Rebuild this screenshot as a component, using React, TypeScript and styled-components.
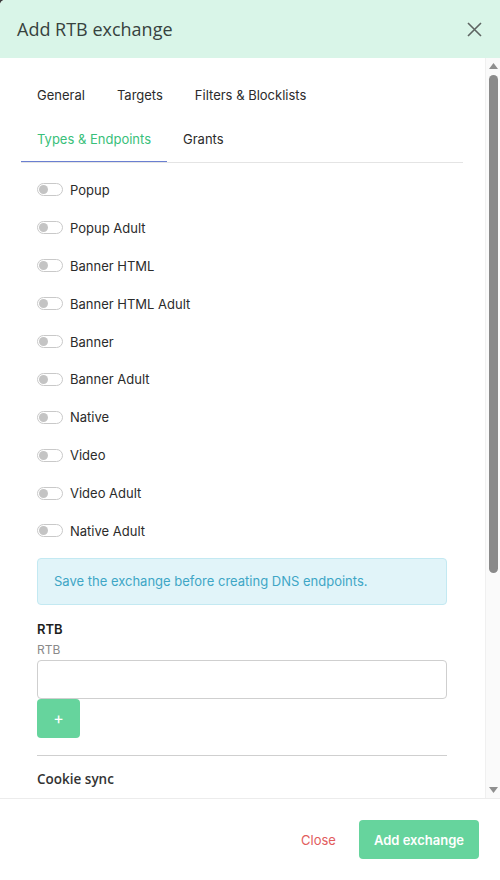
import React from 'react'
import styled, { createGlobalStyle } from 'styled-components'

const GlobalStyle = createGlobalStyle`
  html, body {
    margin: 0;
    padding: 0;
    height: 100%;
    background: #3a3a3a;
  }
  #root {
    height: 100%;
  }
  * {
    box-sizing: border-box;
  }
`

const Modal = styled.div`
  height: 880px;
  width: 500px;
  display: flex;
  flex-direction: column;
  background: #fff;
  border-top-left-radius: 5px;
  overflow: hidden;
  font-family: Inter, 'Noto Sans', sans-serif;
  color: #2b2b2b;
`

const Header = styled.div`
  flex: 0 0 58px;
  display: flex;
  align-items: center;
  justify-content: space-between;
  padding: 0 16px 0 17px;
  background: #d9f5e8;
`

const Title = styled.h2`
  margin: 0;
  font-family: 'Open Sans', sans-serif;
  font-weight: 400;
  font-size: 18px;
  color: #37423e;
`

const CloseX = styled.button`
  border: 0;
  background: transparent;
  padding: 0;
  width: 20px;
  height: 20px;
  display: flex;
  align-items: center;
  justify-content: center;
  cursor: pointer;
`

const BodyRow = styled.div`
  flex: 1;
  display: flex;
  min-height: 0;
`

const Scroller = styled.div`
  flex: 1;
  overflow: hidden;
  padding: 16px 22px 0 21px;
`

const ScrollRail = styled.div`
  flex: 0 0 15px;
  display: flex;
  flex-direction: column;
  align-items: center;
  background: #fafafa;
  border-left: 1px solid #f0f0f0;
`

const ScrollArrow = styled.div`
  flex: 0 0 16px;
  display: flex;
  align-items: center;
  justify-content: center;
`

const ScrollThumb = styled.div`
  width: 9px;
  height: 498px;
  margin-top: 1px;
  border-radius: 5px;
  background: #8a8a8a;
`

const Spacer = styled.div`
  flex: 1;
`

const TabRow = styled.div`
  display: flex;
  flex-wrap: wrap;
  padding-right: 20px;
  border-bottom: 1px solid #e4e4e4;
`

const Tab = styled.div<{ $active?: boolean }>`
  padding: 12px 16px;
  font-size: 13px;
  line-height: 19px;
  color: ${p => (p.$active ? '#39c07a' : '#2b2b2b')};
  border-bottom: 1px solid ${p => (p.$active ? '#6a7fd1' : 'transparent')};
  cursor: pointer;
`

const Pane = styled.div`
  padding: 8px 16px 0;
`

const SwitchRow = styled.label`
  display: flex;
  align-items: center;
  height: 37.9px;
  font-size: 13px;
  color: #2b2b2b;
`

const Switch = styled.span`
  position: relative;
  width: 26px;
  height: 13px;
  border: 1px solid #c9c9c9;
  border-radius: 7px;
  margin-right: 7px;
  &::after {
    content: '';
    position: absolute;
    left: 1px;
    top: 1px;
    width: 9px;
    height: 9px;
    border-radius: 50%;
    background: #c4c4c4;
  }
`

const Alert = styled.div`
  margin-top: 8px;
  padding: 15px 16px;
  background: #e1f4f9;
  border: 1px solid #c3e9f2;
  border-radius: 4px;
  color: #3ea6c6;
  font-size: 13px;
  line-height: 15px;
`

const FieldTitle = styled.div`
  margin-top: 16px;
  font-size: 13px;
  font-weight: 600;
  color: #1e1e1e;
  line-height: 16px;
`

const FieldHint = styled.div`
  margin-top: 5px;
  font-size: 12px;
  color: #8a8a8a;
  line-height: 15px;
`

const Input = styled.input`
  display: block;
  width: 100%;
  height: 39px;
  margin-top: 3px;
  border: 1px solid #cfcfcf;
  border-radius: 4px;
  font-size: 13px;
  padding: 0 12px;
  outline: none;
`

const PlusButton = styled.button`
  display: block;
  width: 43px;
  height: 39px;
  border: 0;
  border-radius: 4px;
  background: #66d49d;
  color: #fff;
  font-size: 16px;
  font-family: Inter, sans-serif;
`

const Divider = styled.hr`
  margin: 17px 0 0;
  border: 0;
  border-top: 1px solid #cfcfcf;
`

const SectionTitle = styled.div`
  margin-top: 14px;
  font-family: 'Open Sans', sans-serif;
  font-size: 13.5px;
  font-weight: 600;
  line-height: 18px;
  color: #333;
`

const Footer = styled.div`
  flex: 0 0 82px;
  display: flex;
  align-items: center;
  justify-content: flex-end;
  gap: 8px;
  padding: 0 21px;
  border-top: 1px solid #ececec;
`

const LinkButton = styled.button`
  border: 0;
  background: transparent;
  color: #e25c5c;
  font-family: Inter, sans-serif;
  font-size: 13px;
  padding: 10px 15px;
  cursor: pointer;
`

const PrimaryButton = styled.button`
  height: 39px;
  padding: 0 15px;
  border: 0;
  border-radius: 4px;
  background: #66d49d;
  color: #fff;
  font-family: Inter, sans-serif;
  font-size: 13px;
  font-weight: 600;
  cursor: pointer;
`

const types = [
  'Popup',
  'Popup Adult',
  'Banner HTML',
  'Banner HTML Adult',
  'Banner',
  'Banner Adult',
  'Native',
  'Video',
  'Video Adult',
  'Native Adult',
]

export default function App() {
  return (
    <>
      <GlobalStyle />
      <Modal>
        <Header>
          <Title>Add RTB exchange</Title>
          <CloseX aria-label="close">
            <svg width="15" height="15" viewBox="0 0 15 15">
              <path d="M1 1 L14 14 M14 1 L1 14" stroke="#5e6462" strokeWidth="1.6" fill="none" />
            </svg>
          </CloseX>
        </Header>
        <BodyRow>
          <Scroller>
            <TabRow>
              <Tab>General</Tab>
              <Tab>Targets</Tab>
              <Tab>Filters &amp; Blocklists</Tab>
              <Tab $active>Types &amp; Endpoints</Tab>
              <Tab>Grants</Tab>
            </TabRow>
            <Pane>
              {types.map(t => (
                <SwitchRow key={t}>
                  <Switch />
                  {t}
                </SwitchRow>
              ))}
              <Alert>Save the exchange before creating DNS endpoints.</Alert>
              <FieldTitle>RTB</FieldTitle>
              <FieldHint>RTB</FieldHint>
              <Input />
              <PlusButton>+</PlusButton>
              <Divider />
              <SectionTitle>Cookie sync</SectionTitle>
            </Pane>
          </Scroller>
          <ScrollRail>
            <ScrollArrow>
              <svg width="9" height="6" viewBox="0 0 9 6">
                <polygon points="4.5,0 9,6 0,6" fill="#8f8f8f" />
              </svg>
            </ScrollArrow>
            <ScrollThumb />
            <Spacer />
            <ScrollArrow>
              <svg width="9" height="6" viewBox="0 0 9 6">
                <polygon points="0,0 9,0 4.5,6" fill="#8f8f8f" />
              </svg>
            </ScrollArrow>
          </ScrollRail>
        </BodyRow>
        <Footer>
          <LinkButton>Close</LinkButton>
          <PrimaryButton>Add exchange</PrimaryButton>
        </Footer>
      </Modal>
    </>
  )
}
